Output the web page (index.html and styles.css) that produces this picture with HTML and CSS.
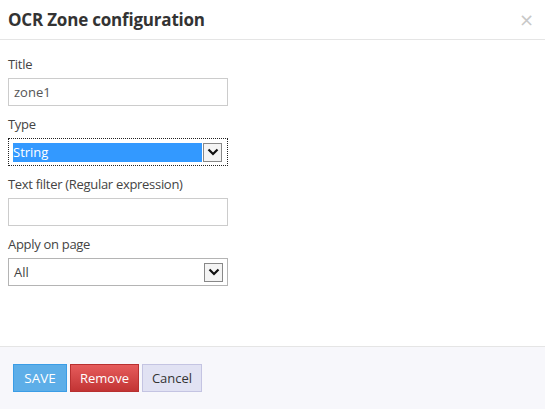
FILE: index.html
```html
<!DOCTYPE html>
<html>
<head>
<meta charset="utf-8">
<link rel="stylesheet" href="styles.css">
</head>
<body>
<div class="modal">
  <div class="modal-header">
    <h1 class="modal-title">OCR Zone configuration</h1>
    <span class="close">×</span>
  </div>
  <div class="modal-body">
    <div class="field">
      <label class="label">Title</label>
      <div class="input">zone1</div>
    </div>
    <div class="field">
      <label class="label">Type</label>
      <div class="select focused">
        <span class="select-value selected">String</span>
        <span class="arrow"><svg width="12" height="8" viewBox="0 0 12 8"><path d="M1.5 1.5 L6 6 L10.5 1.5" fill="none" stroke="#111" stroke-width="2.2"/></svg></span>
      </div>
    </div>
    <div class="field">
      <label class="label">Text filter (Regular expression)</label>
      <div class="input"></div>
    </div>
    <div class="field">
      <label class="label">Apply on page</label>
      <div class="select">
        <span class="select-value">All</span>
        <span class="arrow"><svg width="12" height="8" viewBox="0 0 12 8"><path d="M1.5 1.5 L6 6 L10.5 1.5" fill="none" stroke="#111" stroke-width="2.2"/></svg></span>
      </div>
    </div>
  </div>
  <div class="modal-footer">
    <button class="btn btn-save">SAVE</button>
    <button class="btn btn-remove">Remove</button>
    <button class="btn btn-cancel">Cancel</button>
  </div>
</div>
</body>
</html>
```
FILE: styles.css
```css
html, body {
  margin: 0;
  padding: 0;
  background: #fff;
}
body {
  font-family: "Open Sans", "Noto Sans", "Liberation Sans", sans-serif;
  color: #333;
}
.modal {
  width: 545px;
}
.modal-header {
  height: 39px;
  border-bottom: 1px solid #e5e5e5;
  display: flex;
  align-items: center;
  justify-content: space-between;
  padding: 0 11px 0 8px;
  box-sizing: content-box;
}
.modal-title {
  margin: 0;
  font-size: 17px;
  font-weight: 700;
  color: #333;
  letter-spacing: -0.2px;
  line-height: 24px;
}
.close {
  color: #c8c8c8;
  font-size: 18px;
  line-height: 18px;
  font-family: "DejaVu Sans", sans-serif;
}
.modal-body {
  height: 306px;
  box-sizing: border-box;
  padding: 14px 8px 0 8px;
}
.field {
  display: flex;
  flex-direction: column;
  gap: 4px;
  margin-bottom: 8px;
  width: 220px;
}
.label {
  font-size: 13px;
  line-height: 20px;
  color: #444;
  letter-spacing: -0.3px;
}
.input {
  height: 28px;
  box-sizing: border-box;
  border: 1px solid #cccccc;
  padding: 0 5px;
  font-size: 13px;
  line-height: 26px;
  color: #555;
}
.select {
  height: 28px;
  box-sizing: border-box;
  border: 1px solid #b4b4b4;
  display: flex;
  align-items: center;
  padding: 0 4px 0 5px;
  gap: 1px;
  font-size: 13px;
  color: #444;
}
.select.focused {
  outline: 1px dotted #222;
  outline-offset: -1px;
  border-color: #fff;
  padding: 0 5px 0 4px;
}
.select-value {
  flex: 1;
  line-height: 19px;
}
.select-value.selected {
  background: #3399ff;
  color: #fff;
}
.arrow {
  width: 19px;
  height: 19px;
  box-sizing: border-box;
  border: 1px solid #888;
  background: #f4f4f4;
  display: flex;
  align-items: center;
  justify-content: center;
}
.modal-footer {
  height: 63px;
  box-sizing: border-box;
  border-top: 1px solid #e5e5e5;
  background: #f7f7fb;
  padding: 17px 13px;
  display: flex;
  gap: 3px;
}
.btn {
  height: 28px;
  box-sizing: border-box;
  font-family: inherit;
  font-size: 13px;
  padding: 0;
  border: 1px solid;
  margin: 0;
  cursor: pointer;
}
.btn-save {
  width: 54px;
  background: #5daee8;
  border-color: #3b9de6;
  color: #fff;
  font-size: 13.5px;
}
.btn-remove {
  width: 69px;
  background: linear-gradient(#e65c5c, #c23434);
  border-color: #b83030;
  color: #fff;
}
.btn-cancel {
  width: 60px;
  background: #e1e2f3;
  border-color: #c4c4e2;
  color: #333;
}
```
